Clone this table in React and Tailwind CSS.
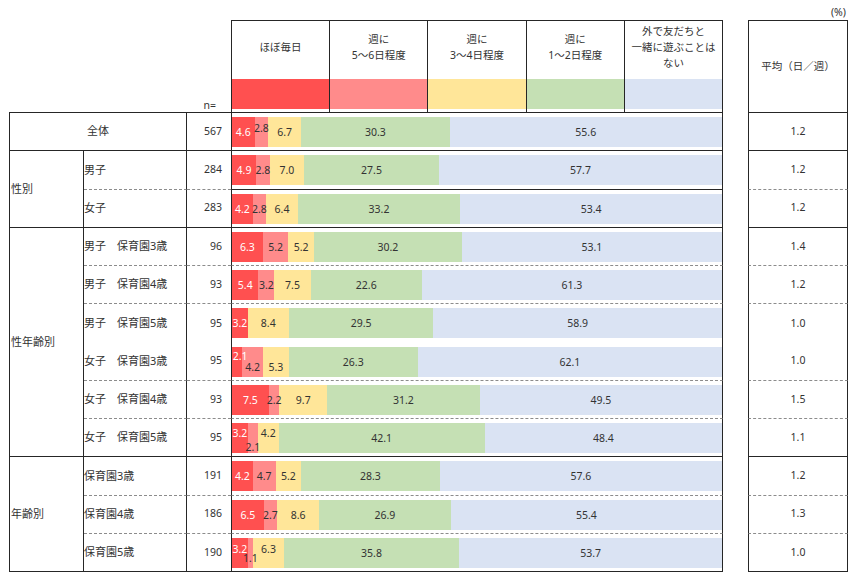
import React from 'react';

const COLORS = ['bg-[#ff5050]', 'bg-[#ff8b8b]', 'bg-[#ffe699]', 'bg-[#c5e0b4]', 'bg-[#dae3f3]'];

const HEADERS = [
  ['ほぼ毎日'],
  ['週に', '5～6日程度'],
  ['週に', '3～4日程度'],
  ['週に', '1～2日程度'],
  ['外で友だちと', '一緒に遊ぶことは', 'ない'],
];

// line: bottom border of the row -> [left table, chart, average]
const GROUPS = [
  {
    name: null,
    rows: [
      { label: '全体', n: 567, v: [4.6, 2.8, 6.7, 30.3, 55.6], avg: '1.2', line: ['solid', 'solid', 'solid'], off: [null, [0, -4]] },
    ],
  },
  {
    name: '性別',
    rows: [
      { label: '男子', n: 284, v: [4.9, 2.8, 7.0, 27.5, 57.7], avg: '1.2', line: ['dashed', 'solid', 'dashed'] },
      { label: '女子', n: 283, v: [4.2, 2.8, 6.4, 33.2, 53.4], avg: '1.2', line: ['solid', 'solid', 'solid'] },
    ],
  },
  {
    name: '性年齢別',
    rows: [
      { label: '男子　保育園3歳', n: 96, v: [6.3, 5.2, 5.2, 30.2, 53.1], avg: '1.4', line: ['dashed', 'dashed', 'dashed'] },
      { label: '男子　保育園4歳', n: 93, v: [5.4, 3.2, 7.5, 22.6, 61.3], avg: '1.2', line: ['dashed', 'dashed', 'dashed'] },
      { label: '男子　保育園5歳', n: 95, v: [3.2, 0, 8.4, 29.5, 58.9], avg: '1.0', line: ['none', 'none', 'none'] },
      { label: '女子　保育園3歳', n: 95, v: [2.1, 4.2, 5.3, 26.3, 62.1], avg: '1.0', line: ['dashed', 'dashed', 'dashed'], off: [[3, -6], [0, 5], [0, 5]] },
      { label: '女子　保育園4歳', n: 93, v: [7.5, 2.2, 9.7, 31.2, 49.5], avg: '1.5', line: ['dashed', 'dashed', 'dashed'] },
      { label: '女子　保育園5歳', n: 95, v: [3.2, 2.1, 4.2, 42.1, 48.4], avg: '1.1', line: ['solid', 'solid', 'solid'], off: [[0, -5], [0, 9], [0, -5]] },
    ],
  },
  {
    name: '年齢別',
    rows: [
      { label: '保育園3歳', n: 191, v: [4.2, 4.7, 5.2, 28.3, 57.6], avg: '1.2', line: ['dashed', 'dashed', 'dashed'] },
      { label: '保育園4歳', n: 186, v: [6.5, 2.7, 8.6, 26.9, 55.4], avg: '1.3', line: ['dashed', 'dashed', 'dashed'] },
      { label: '保育園5歳', n: 190, v: [3.2, 1.1, 6.3, 35.8, 53.7], avg: '1.0', line: ['solid', 'solid', 'solid'], off: [[0, -4], [0, 5], [0, -4]] },
    ],
  },
];

const LINE = {
  solid: 'border-b border-b-[#262626]',
  dashed: 'border-b [border-bottom-style:dashed] border-b-[#8c8c8c]',
  none: '',
};

const SPAN = { 2: 'row-span-2', 3: 'row-span-3', 6: 'row-span-6' };

const Bar = ({ values, off = [] }) => (
  <div className="flex h-[30px]">
    {values.map((v, i) => (
      <div key={i} className={`relative ${COLORS[i]}`} style={{ flexGrow: v, flexBasis: 0 }}>
        {v > 0 && (
          <div className="absolute inset-0 z-10 flex items-center justify-center whitespace-nowrap">
            <span
              className={`pt-[2px] ${i === 0 ? 'text-white' : 'text-[#333]'}`}
              style={off[i] ? { transform: `translate(${off[i][0]}px, ${off[i][1]}px)` } : undefined}
            >
              {v.toFixed(1)}
            </span>
          </div>
        )}
      </div>
    ))}
  </div>
);

const Row = ({ row, first, spanned }) => (
  <>
    {first}
    {!spanned && (
      <div className={`col-start-2 flex items-center border-r border-r-[#262626] text-[11px] ${LINE[row.line[0]]}`}>
        {row.label}
      </div>
    )}
    <div className={`col-start-3 flex items-center justify-end pr-[9px] ${LINE[row.line[0]]}`}>{row.n}</div>
    <div className={`col-start-4 border-l border-r border-l-[#262626] border-r-[#262626] pt-[4px] ${LINE[row.line[1]]}`}>
      <Bar values={row.v} off={row.off} />
    </div>
    <div className={`col-start-6 flex items-center justify-center border-l border-r border-l-[#262626] border-r-[#262626] ${LINE[row.line[2]]}`}>
      {row.avg}
    </div>
  </>
);

export default function App() {
  const all = GROUPS[0].rows[0];

  return (
    <div className="min-h-[580px] bg-white pl-[9px] font-['Noto_Sans','Noto_Sans_CJK_JP',sans-serif] text-[10.5px] text-[#333]">
      <div className="flex h-[20px] w-[839px] items-end justify-end pb-[3px] pr-[2px] leading-none">(%)</div>

      <div className="grid grid-cols-[75px_103px_44px_492px_25px_100px] grid-rows-[93px_repeat(12,38.25px)]">
        {/* header */}
        <div className="col-span-3 col-start-1 flex items-end justify-end border-b border-b-[#262626] pb-[2px] pr-[15px] leading-none">
          n=
        </div>
        <div className="col-start-4 flex border border-[#262626]">
          {HEADERS.map((lines, i) => (
            <div key={i} className={`flex flex-1 flex-col ${i < 4 ? 'border-r border-r-[#262626]' : ''}`}>
              <div className="flex h-[58px] flex-col items-center justify-center pb-[6px] text-center leading-[16px]">
                {lines.map((l) => (
                  <span key={l}>{l}</span>
                ))}
              </div>
              <div className={`h-[30px] ${COLORS[i]}`} />
            </div>
          ))}
        </div>
        <div className="col-start-6 flex items-center justify-center border border-[#262626]">平均（日／週）</div>

        {/* body */}
        <Row
          row={all}
          spanned
          first={
            <div className="col-span-2 col-start-1 flex items-center justify-center border-b border-l border-r border-[#262626] text-[11px]">
              {all.label}
            </div>
          }
        />
        {GROUPS.slice(1).map((g) =>
          g.rows.map((row, j) => (
            <Row
              key={row.label}
              row={row}
              first={
                j === 0 ? (
                  <div
                    className={`col-start-1 ${SPAN[g.rows.length]} flex items-center border-b border-l border-r border-[#262626] pl-[1px] text-[11px]`}
                  >
                    {g.name}
                  </div>
                ) : null
              }
            />
          ))
        )}
      </div>
    </div>
  );
}
